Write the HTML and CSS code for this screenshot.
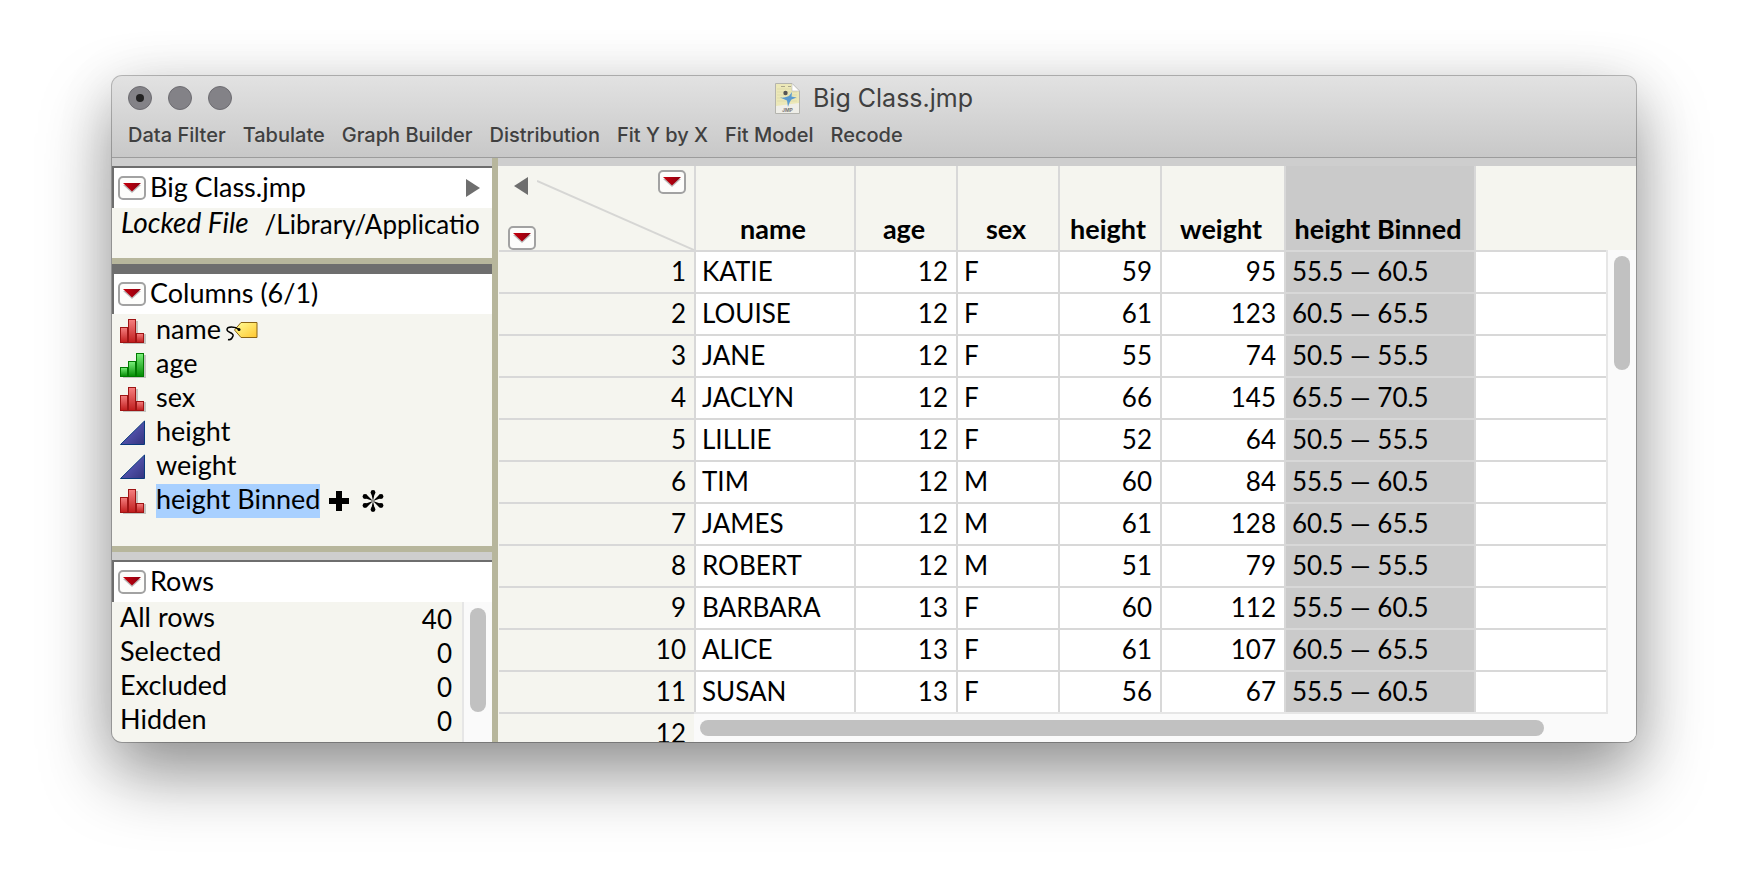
FILE: index.html
```html
<!DOCTYPE html>
<html lang="en">
<head>
    <meta charset="UTF-8">
    <meta name="viewport" content="width=device-width, initial-scale=1.0">
    <title>Big Class.jmp</title>
    <link rel="stylesheet" href="styles.css">
</head>
<body>
    <!-- Shared icons -->
    <svg class="sprite" aria-hidden="true">
        <defs>
            <linearGradient id="red-arrow" x1="0" y1="0" x2="1" y2="0">
                <stop offset="0" stop-color="#c8000c"/>
                <stop offset="1" stop-color="#8c0010"/>
            </linearGradient>
            <linearGradient id="red-bar" x1="0" y1="0" x2="0" y2="1">
                <stop offset="0" stop-color="#f58080"/>
                <stop offset="1" stop-color="#c01c1c"/>
            </linearGradient>
            <linearGradient id="green-bar" x1="0" y1="0" x2="0" y2="1">
                <stop offset="0" stop-color="#7cf07c"/>
                <stop offset="1" stop-color="#008a00"/>
            </linearGradient>
            <linearGradient id="blue-fill" x1="0" y1="0" x2="1" y2="1">
                <stop offset="0" stop-color="#6a6ad0"/>
                <stop offset="1" stop-color="#34347e"/>
            </linearGradient>
            <linearGradient id="tag-fill" x1="0" y1="0" x2="1" y2="1">
                <stop offset="0" stop-color="#ffff9a"/>
                <stop offset="1" stop-color="#ffc62e"/>
            </linearGradient>
        </defs>
        <symbol id="menu-arrow" viewBox="0 0 18 10">
            <path d="M0 2H18L9 10Z" fill="#bbb"/>
            <path d="M0 0H18L9 8.500Z" fill="url(#red-arrow)"/>
        </symbol>
        <symbol id="nominal" viewBox="0 0 26 26">
            <path d="M3 11h7V3h8v13h8v10H3z" fill="#c4c4c0"/>
            <g fill="url(#red-bar)" stroke="#9e1414">
                <rect x=".5" y="9.500" width="7" height="15"/>
                <rect x="16.500" y="15.500" width="7" height="9"/>
                <rect x="8.500" y="1.500" width="7" height="23"/>
            </g>
        </symbol>
        <symbol id="ordinal" viewBox="0 0 26 26">
            <path d="M3 18h7v-6h8V3h8v23H3z" fill="#c4c4c0"/>
            <g fill="url(#green-bar)" stroke="#007a00">
                <rect x=".5" y="15.500" width="7" height="9"/>
                <rect x="8.500" y="9.500" width="7" height="15"/>
                <rect x="16.500" y="1.500" width="7" height="23"/>
            </g>
        </symbol>
        <symbol id="continuous" viewBox="0 0 26 26">
            <path d="M.5 24.500H24.500V1Z" fill="url(#blue-fill)" stroke="#0a3a7c"/>
        </symbol>
    </svg>

    <main class="window">
        <header class="titlebar">
            <div class="title-row">
                <div class="lights">
                    <button class="light edited" aria-label="Close"></button>
                    <button class="light" aria-label="Minimize"></button>
                    <button class="light" aria-label="Zoom"></button>
                </div>
                <h1 class="title">
                    <svg class="file-icon" viewBox="0 0 25 31" aria-hidden="true">
                        <path d="M.5 .5H17L24.500 8V30.500H.5Z" fill="#efeee8" stroke="#b4b4ae"/>
                        <path d="M1 1H17L24 8V20L1 23Z" fill="#ece8b8"/>
                        <path d="M2 6H17M2 9H22M2 12H22M2 15H22M2 18H22" stroke="#d8d4a4" stroke-width=".6"/>
                        <path d="M6 3.500H10M13 3.500H16" stroke="#aaa78c"/>
                        <path d="M17 .5V8H24.500Z" fill="#fff" stroke="#bbb" stroke-width=".6"/>
                        <circle cx="10.500" cy="10" r="2.200" fill="#555"/>
                        <path d="M5 14.500C9 15 12 14 14 13L17 9L16.500 13.500L21.500 14.500L16.500 16.500C15 18 14 21 13 24L12 17.500Z" fill="#5b9bd0"/>
                        <text class="file-type" x="7" y="29">JMP</text>
                    </svg>
                    Big Class.jmp
                </h1>
            </div>
            <nav class="toolbar">
                <button class="tool">Data Filter</button>
                <button class="tool">Tabulate</button>
                <button class="tool">Graph Builder</button>
                <button class="tool">Distribution</button>
                <button class="tool">Fit Y by X</button>
                <button class="tool">Fit Model</button>
                <button class="tool">Recode</button>
            </nav>
        </header>

        <div class="content">
            <aside class="sidebar">
                <section class="panel table-panel">
                    <div class="panel-head">
                        <button class="menu" aria-label="Table menu"><svg><use href="#menu-arrow"/></svg></button>
                        <h2>Big Class.jmp</h2>
                        <button class="fold" aria-label="Expand"><svg viewBox="0 0 14 18"><path d="M0 0L14 9L0 18Z"/></svg></button>
                    </div>
                    <div class="locked"><em>Locked File</em><span>/Library/Applicatio</span></div>
                </section>

                <section class="panel columns-panel">
                    <div class="panel-head">
                        <button class="menu" aria-label="Columns menu"><svg><use href="#menu-arrow"/></svg></button>
                        <h2>Columns (6/1)</h2>
                    </div>
                    <ul class="columns">
                        <li><svg class="type"><use href="#nominal"/></svg><span>name</span>
                            <svg class="tag" viewBox="0 0 32 20" aria-hidden="true">
                                <path d="M8.500 9L15 1.500H31V16.500H15Z" fill="url(#tag-fill)" stroke="#8a6414"/>
                                <circle cx="13" cy="8.500" r="1.500"/>
                                <path d="M13 8.500C9 5 1 5 1 8.500C1 12 8 11 7 15C6 18 4 19 2 18.500" fill="none" stroke="#000" stroke-width="1.500"/>
                            </svg>
                        </li>
                        <li><svg class="type"><use href="#ordinal"/></svg><span>age</span></li>
                        <li><svg class="type"><use href="#nominal"/></svg><span>sex</span></li>
                        <li><svg class="type"><use href="#continuous"/></svg><span>height</span></li>
                        <li><svg class="type"><use href="#continuous"/></svg><span>weight</span></li>
                        <li><svg class="type"><use href="#nominal"/></svg><span class="selected">height Binned</span>
                            <svg class="mark" viewBox="0 0 20 20" aria-hidden="true"><path d="M10 0V20M0 10H20" stroke="#000" stroke-width="6"/></svg>
                            <svg class="mark star" viewBox="0 0 22 22" aria-hidden="true">
                                <path d="M11 11L9 2H13L9 20H13L11 11L2.500 8L4.500 4.500L17.500 17.500L19.500 14L11 11L2.500 14L4.500 17.500L17.500 4.500L19.500 8Z"/>
                                <g><circle cx="11" cy="2.500" r="2.400"/><circle cx="11" cy="19.500" r="2.400"/><circle cx="3" cy="6.500" r="2.400"/><circle cx="19" cy="15.500" r="2.400"/><circle cx="3" cy="15.500" r="2.400"/><circle cx="19" cy="6.500" r="2.400"/></g>
                            </svg>
                        </li>
                    </ul>
                </section>

                <section class="panel rows-panel">
                    <div class="panel-head">
                        <button class="menu" aria-label="Rows menu"><svg><use href="#menu-arrow"/></svg></button>
                        <h2>Rows</h2>
                    </div>
                    <div class="rows-body">
                        <dl class="counts">
                            <div><dt>All rows</dt><dd>40</dd></div>
                            <div><dt>Selected</dt><dd>0</dd></div>
                            <div><dt>Excluded</dt><dd>0</dd></div>
                            <div><dt>Hidden</dt><dd>0</dd></div>
                        </dl>
                        <div class="track"><div class="thumb"></div></div>
                    </div>
                </section>
            </aside>

            <section class="grid">
                <table class="data">
                    <colgroup>
                        <col class="w-index"><col class="w-name"><col class="w-small"><col class="w-small">
                        <col class="w-small"><col class="w-weight"><col class="w-binned"><col>
                    </colgroup>
                    <thead>
                        <tr>
                            <td class="corner">
                                <svg class="diagonal" viewBox="0 0 157 70" aria-hidden="true"><path d="M0 1L157 70" stroke="#d6d6d4" stroke-width="2"/></svg>
                                <div class="corner-top">
                                    <button class="fold" aria-label="Collapse"><svg viewBox="0 0 14 18"><path d="M14 0L0 9L14 18Z"/></svg></button>
                                    <button class="menu" aria-label="Columns menu"><svg><use href="#menu-arrow"/></svg></button>
                                </div>
                                <button class="menu" aria-label="Rows menu"><svg><use href="#menu-arrow"/></svg></button>
                            </td>
                            <th>name</th>
                            <th>age</th>
                            <th>sex</th>
                            <th>height</th>
                            <th>weight</th>
                            <th class="binned">height Binned</th>
                            <td class="blank"></td>
                        </tr>
                    </thead>
                    <tbody>
                        <tr><th>1</th><td>KATIE</td><td class="num">12</td><td>F</td><td class="num">59</td><td class="num">95</td><td class="binned">55.5 — 60.5</td><td></td></tr>
                        <tr><th>2</th><td>LOUISE</td><td class="num">12</td><td>F</td><td class="num">61</td><td class="num">123</td><td class="binned">60.5 — 65.5</td><td></td></tr>
                        <tr><th>3</th><td>JANE</td><td class="num">12</td><td>F</td><td class="num">55</td><td class="num">74</td><td class="binned">50.5 — 55.5</td><td></td></tr>
                        <tr><th>4</th><td>JACLYN</td><td class="num">12</td><td>F</td><td class="num">66</td><td class="num">145</td><td class="binned">65.5 — 70.5</td><td></td></tr>
                        <tr><th>5</th><td>LILLIE</td><td class="num">12</td><td>F</td><td class="num">52</td><td class="num">64</td><td class="binned">50.5 — 55.5</td><td></td></tr>
                        <tr><th>6</th><td>TIM</td><td class="num">12</td><td>M</td><td class="num">60</td><td class="num">84</td><td class="binned">55.5 — 60.5</td><td></td></tr>
                        <tr><th>7</th><td>JAMES</td><td class="num">12</td><td>M</td><td class="num">61</td><td class="num">128</td><td class="binned">60.5 — 65.5</td><td></td></tr>
                        <tr><th>8</th><td>ROBERT</td><td class="num">12</td><td>M</td><td class="num">51</td><td class="num">79</td><td class="binned">50.5 — 55.5</td><td></td></tr>
                        <tr><th>9</th><td>BARBARA</td><td class="num">13</td><td>F</td><td class="num">60</td><td class="num">112</td><td class="binned">55.5 — 60.5</td><td></td></tr>
                        <tr><th>10</th><td>ALICE</td><td class="num">13</td><td>F</td><td class="num">61</td><td class="num">107</td><td class="binned">60.5 — 65.5</td><td></td></tr>
                        <tr><th>11</th><td>SUSAN</td><td class="num">13</td><td>F</td><td class="num">56</td><td class="num">67</td><td class="binned">55.5 — 60.5</td><td></td></tr>
                        <tr><th>12</th><td></td><td></td><td></td><td></td><td></td><td></td><td></td></tr>
                    </tbody>
                </table>
                <div class="track grid-vertical"><div class="thumb"></div></div>
                <div class="track-across"><div class="thumb"></div></div>
            </section>
        </div>
    </main>
</body>
</html>
```

FILE: styles.css
```css
* {
    box-sizing: border-box;
}

body {
    margin: 0;
    height: 100vh;
    padding: 76px 112px 148px;
    background-color: #fff;
    color: #000;
    font-family: Lato, "Open Sans", sans-serif;
    font-size: 26px;
    line-height: 34px;
    overflow: hidden;
}

h1, h2, ul, dl, dd {
    margin: 0;
    padding: 0;
    font-size: inherit;
    font-weight: normal;
}

button {
    padding: 0;
    border: none;
    background: none;
    font: inherit;
    color: inherit;
}

svg {
    display: block;
    flex: none;
}

.sprite {
    position: absolute;
    width: 0;
    height: 0;
}

.window {
    display: flex;
    flex-direction: column;
    height: 100%;
    border-radius: 10px;
    background-color: #cecece;
    box-shadow: 0 0 0 1px rgba(0, 0, 0, 0.25), 0 32px 70px rgba(0, 0, 0, 0.4), 0 10px 60px rgba(0, 0, 0, 0.1);
    overflow: hidden;
}

/* Title bar */
.titlebar {
    height: 82px;
    padding: 4px 16px 0;
    border-bottom: 1px solid #9c9c9c;
    background: linear-gradient(#e2e2e2, #c8c8c8);
    color: #404040;
    font-family: Inter, sans-serif;
}

.title-row {
    display: grid;
    grid-template-columns: 1fr auto 1fr;
    align-items: center;
    height: 36px;
}

.lights {
    display: flex;
    gap: 16px;
}

.light {
    display: grid;
    place-items: center;
    width: 24px;
    height: 24px;
    border: 1px solid #6d6c71;
    border-radius: 50%;
    background-color: #838287;
}

.edited::after {
    content: "";
    width: 8px;
    height: 8px;
    border-radius: 50%;
    background-color: #222;
}

.title {
    display: flex;
    align-items: center;
    gap: 13px;
    font-size: 25px;
}

.file-icon {
    width: 25px;
    height: 31px;
}

.file-type {
    fill: #777;
    font-size: 5px;
    font-weight: bold;
}

.toolbar {
    display: flex;
    gap: 17px;
    font-size: 20px;
    font-weight: 500;
    line-height: 38px;
}

/* Sidebar */
.content {
    display: flex;
    flex: 1;
    min-height: 0;
}

.sidebar {
    display: flex;
    flex-direction: column;
    width: 386px;
    border-right: 6px solid #b7b69c;
    font-size: 27px;
}

.panel {
    border-top: 8px solid #cecece;
    background-color: #f5f5ef;
}

.panel-head {
    display: flex;
    align-items: center;
    gap: 4px;
    height: 42px;
    padding: 0 12px 0 4px;
    border-top: 2px solid #6e6e6e;
    border-left: 2px solid #6e6e6e;
    background-color: #fff;
}

.panel-head h2 {
    padding-bottom: 2px;
}

.table-panel,
.columns-panel {
    border-bottom: 6px solid #b7b69c;
}

.table-panel {
    height: 106px;
}

.columns-panel {
    height: 288px;
    border-top-color: #6e6e6e;
}

.rows-panel {
    display: flex;
    flex-direction: column;
    flex: 1;
}

.menu {
    display: grid;
    place-items: center;
    flex: none;
    width: 28px;
    height: 24px;
    border: 2px solid #a2a2a2;
    border-radius: 5px;
    background-color: #fdfdfb;
}

.menu svg {
    width: 18px;
    height: 10px;
}

.fold {
    margin-left: auto;
    fill: #6e6e6e;
}

.fold svg {
    width: 14px;
    height: 18px;
}

.locked {
    display: flex;
    gap: 16px;
    padding-left: 9px;
    font-size: 26px;
    line-height: 32px;
    white-space: nowrap;
}

.locked em {
    font-size: 28px;
    line-height: 28px;
}

.columns {
    list-style: none;
}

.columns li {
    display: flex;
    align-items: center;
    height: 34px;
    padding-left: 8px;
}

.columns span {
    padding-bottom: 4px;
    line-height: 30px;
}

.type {
    width: 26px;
    height: 26px;
    margin-right: 10px;
}

.tag {
    width: 32px;
    height: 20px;
    margin-left: 5px;
}

.columns .selected {
    background-color: #a8d0ff;
}

.mark {
    width: 20px;
    height: 20px;
    margin-left: 9px;
}

.star {
    width: 22px;
    height: 22px;
    margin-left: 13px;
}

.rows-body {
    display: flex;
    flex: 1;
}

.counts {
    flex: 1;
    padding: 0 10px 0 8px;
}

.counts div {
    display: flex;
    justify-content: space-between;
    height: 34px;
}

.counts dt {
    line-height: 30px;
}

.counts dd {
    font-size: 26px;
}

/* Scroll bars */
.track {
    width: 30px;
    padding: 6px;
    border-left: 2px solid #e6e6e6;
    background-color: #fafafa;
}

.thumb {
    width: 16px;
    height: 104px;
    border-radius: 8px;
    background-color: #c1c1c1;
}

.grid-vertical {
    position: absolute;
    top: 84px;
    right: 0;
    bottom: 0;
}

.grid-vertical .thumb {
    height: 114px;
}

.track-across {
    position: absolute;
    left: 196px;
    right: 28px;
    bottom: 0;
    height: 30px;
    padding: 6px 64px 6px 6px;
    border-top: 2px solid #e6e6e6;
    background-color: #fafafa;
}

.track-across .thumb {
    width: 100%;
    height: 16px;
}

/* Data table */
.grid {
    position: relative;
    flex: 1;
    margin-top: 8px;
    padding-left: 1px;
    background-color: #f5f5ef;
    overflow: hidden;
}

.data {
    width: 100%;
    table-layout: fixed;
    border-spacing: 0;
}

.w-index {
    width: 197px;
}

.w-name {
    width: 160px;
}

.w-small {
    width: 102px;
}

.w-weight {
    width: 124px;
}

.w-binned {
    width: 190px;
}

.data th,
.data td {
    height: 42px;
    padding: 0 6px 2px;
    border-right: 2px solid #d8d8d8;
    border-bottom: 2px solid #d8d8d8;
    background-color: #fff;
    text-align: left;
    white-space: nowrap;
}

.data thead th {
    height: 86px;
    padding: 0 10px 4px 6px;
    background-color: #f5f5ef;
    font-size: 27px;
    text-align: center;
    vertical-align: bottom;
}

.data tbody th {
    padding-right: 8px;
    background-color: #f5f5ef;
    font-weight: normal;
    text-align: right;
}

.data .num {
    padding-right: 8px;
    text-align: right;
}

.data .binned,
.data thead .binned {
    background-color: #cacaca;
}

.data .blank {
    border-right: none;
    background-color: #f5f5ef;
}

.data .corner {
    position: relative;
    height: 86px;
    padding: 4px 8px 0 9px;
    background-color: #f5f5ef;
    line-height: 24px;
    vertical-align: top;
}

.corner-top {
    display: flex;
    align-items: flex-start;
    justify-content: space-between;
    height: 56px;
    padding-left: 6px;
}

.corner-top .fold {
    margin-left: 0;
    padding-top: 7px;
}

.diagonal {
    position: absolute;
    right: 0;
    bottom: 0;
    width: 157px;
    height: 70px;
}
```
